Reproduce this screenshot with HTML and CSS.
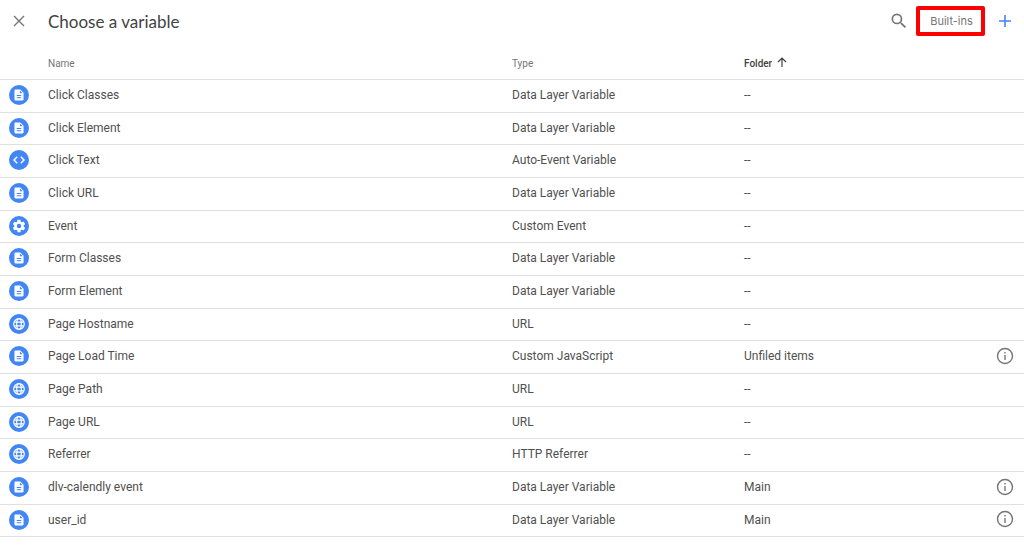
FILE: index.html
```html
<!DOCTYPE html>
<html lang="en">
<head>
    <meta charset="utf-8">
    <title>Choose a variable</title>
    <link rel="stylesheet" href="styles.css">
</head>
<body>
    <header class="toolbar">
        <button class="icon-button close" id="close" aria-label="Close">
            <svg width="12" height="12" viewBox="0 0 12 12"><path d="M1 1l10 10M11 1L1 11"/></svg>
        </button>
        <h1 class="title">Choose a variable</h1>
        <button class="icon-button search" aria-label="Search">
            <svg width="20" height="20" viewBox="0 0 24 24"><path d="M15.5 14h-.79l-.28-.27A6.47 6.47 0 0 0 16 9.5 6.5 6.5 0 1 0 9.5 16c1.61 0 3.09-.59 4.23-1.57l.27.28v.79l5 4.99L20.49 19l-4.99-5zm-6 0a4.5 4.5 0 1 1 0-9 4.5 4.5 0 0 1 0 9z"/></svg>
        </button>
        <button class="built-ins">Built-ins</button>
        <button class="icon-button add" aria-label="New variable">
            <svg width="12" height="12" viewBox="0 0 12 12"><path d="M6 0v12M0 6h12"/></svg>
        </button>
    </header>

    <table class="variables">
        <thead>
            <tr>
                <th class="col-icon"></th>
                <th class="col-name">Name</th>
                <th class="col-type">Type</th>
                <th class="col-folder sorted">Folder
                    <svg class="arrow" width="10" height="10" viewBox="0 0 10 10"><path d="M5 10V1M1 5l4-4 4 4"/></svg>
                </th>
                <th class="col-info"></th>
            </tr>
        </thead>
        <tbody id="rows"></tbody>
    </table>

    <svg class="symbols" width="0" height="0">
        <symbol id="doc" viewBox="-1 -1 22 22">
            <path fill="#fff" fill-rule="evenodd" d="M6.2 4h5.3L15 7.5v7.3c0 .7-.5 1.2-1.2 1.2H6.2c-.7 0-1.2-.5-1.2-1.2V5.2c0-.7.5-1.2 1.2-1.2zM11 5v3h3zM7.5 10v1h5v-1zM7.5 12.5v1h5v-1z"/>
        </symbol>
        <symbol id="code" viewBox="0 0 20 20">
            <path fill="none" stroke="#fff" stroke-width="1.5" d="M8.2 6.8L5 10l3.2 3.2M11.8 6.8L15 10l-3.2 3.2"/>
        </symbol>
        <symbol id="gear" viewBox="-4 -4 32 32">
            <path fill="#fff" d="M19.43 12.98c.04-.32.07-.64.07-.98s-.03-.66-.07-.98l2.11-1.65c.19-.15.24-.42.12-.64l-2-3.46c-.12-.22-.39-.3-.61-.22l-2.49 1c-.52-.4-1.08-.73-1.69-.98l-.38-2.65A.488.488 0 0 0 14 2h-4c-.25 0-.46.18-.49.42l-.38 2.65c-.61.25-1.17.59-1.69.98l-2.49-1c-.23-.09-.49 0-.61.22l-2 3.46c-.13.22-.07.49.12.64l2.11 1.65c-.04.32-.07.65-.07.98s.03.66.07.98l-2.11 1.65c-.19.15-.24.42-.12.64l2 3.46c.12.22.39.3.61.22l2.49-1c.52.4 1.08.73 1.69.98l.38 2.65c.03.24.24.42.49.42h4c.25 0 .46-.18.49-.42l.38-2.65c.61-.25 1.17-.59 1.69-.98l2.49 1c.23.09.49 0 .61-.22l2-3.46c.12-.22.07-.49-.12-.64l-2.11-1.65zM12 15.5a3.5 3.5 0 1 1 0-7 3.5 3.5 0 0 1 0 7z"/>
        </symbol>
        <symbol id="globe" viewBox="0 0 20 20">
            <g fill="none" stroke="#fff" stroke-width="1.2">
                <circle cx="10" cy="10" r="5.3"/>
                <ellipse cx="10" cy="10" rx="2.3" ry="5.3"/>
                <path d="M5.2 8.2h9.6M5.2 11.8h9.6"/>
            </g>
        </symbol>
        <symbol id="info" viewBox="0 0 18 18">
            <circle cx="9" cy="9" r="7.5" fill="none" stroke="#757575" stroke-width="1.4"/>
            <path fill="#757575" d="M8.3 8h1.4v5H8.3zM8.3 5h1.4v1.4H8.3z"/>
        </symbol>
    </svg>

    <script src="script.js"></script>
</body>
</html>
```

FILE: styles.css
```css
* {
    box-sizing: border-box;
}

body {
    margin: 0;
    background: #fff;
    color: #505050;
    font-family: Roboto, "Liberation Sans", sans-serif;
    font-size: 12px;
}

button {
    border: none;
    background: none;
    font-family: inherit;
    cursor: pointer;
}

svg {
    display: block;
}

.toolbar {
    display: flex;
    align-items: center;
    height: 42px;
    padding-right: 7px;
}

.icon-button {
    display: flex;
    align-items: center;
    justify-content: center;
    padding: 0;
    height: 24px;
    fill: none;
}

.close {
    width: 38px;
    stroke: #757575;
    stroke-width: 1.4;
}

.title {
    flex: 1;
    margin: 0;
    padding-left: 10px;
    color: #424242;
    font-family: Lato, Roboto, sans-serif;
    font-size: 17px;
    font-weight: 400;
}

.search {
    width: 20px;
    margin-right: 7px;
    fill: #757575;
}

.built-ins {
    width: 69px;
    height: 30px;
    padding: 0 0 0 2px;
    border: 4px solid #f00;
    border-radius: 2px;
    color: #757575;
    font-family: Inter, Roboto, sans-serif;
    font-size: 11px;
}

.add {
    width: 24px;
    margin-left: 8px;
    stroke: #4285f4;
    stroke-width: 1.6;
}

.variables {
    width: 100%;
    table-layout: fixed;
    border-spacing: 0;
}

.variables th,
.variables td {
    padding: 0;
    border-bottom: 1px solid #e0e0e0;
    text-align: left;
    vertical-align: middle;
}

.variables th {
    height: 38px;
    padding-top: 5px;
    color: #757575;
    font-size: 10px;
    font-weight: 400;
}

.variables .sorted {
    color: #424242;
    font-weight: 500;
}

.arrow {
    display: inline-block;
    margin-left: 2px;
    fill: none;
    stroke: #424242;
    stroke-width: 1.2;
}

.variables td {
    height: 33px;
    padding-bottom: 2px;
}

.variables tr:nth-child(3n + 2) td {
    height: 32px;
}

.variables .cell-info {
    padding-bottom: 0;
}

.col-icon {
    width: 48px;
}

.col-type {
    width: 232px;
}

.col-folder {
    width: 232px;
}

.col-info {
    width: 48px;
}

.badge {
    width: 20px;
    height: 20px;
    margin-left: 9px;
    border-radius: 50%;
    background: #4285f4;
}

.info {
    width: 18px;
    height: 18px;
    margin-left: 20px;
    padding: 0;
}

.symbols {
    position: absolute;
}
```

FILE: script.js
```javascript
const variables = [
    ['doc', 'Click Classes', 'Data Layer Variable', '--'],
    ['doc', 'Click Element', 'Data Layer Variable', '--'],
    ['code', 'Click Text', 'Auto-Event Variable', '--'],
    ['doc', 'Click URL', 'Data Layer Variable', '--'],
    ['gear', 'Event', 'Custom Event', '--'],
    ['doc', 'Form Classes', 'Data Layer Variable', '--'],
    ['doc', 'Form Element', 'Data Layer Variable', '--'],
    ['globe', 'Page Hostname', 'URL', '--'],
    ['doc', 'Page Load Time', 'Custom JavaScript', 'Unfiled items'],
    ['globe', 'Page Path', 'URL', '--'],
    ['globe', 'Page URL', 'URL', '--'],
    ['globe', 'Referrer', 'HTTP Referrer', '--'],
    ['doc', 'dlv-calendly event', 'Data Layer Variable', 'Main'],
    ['doc', 'user_id', 'Data Layer Variable', 'Main']
];

document.getElementById('rows').innerHTML = variables.map(([icon, name, type, folder]) => {
    // only variables that live in a folder have details
    const info = folder === '--' ? '' :
        `<button class="info" aria-label="About ${name}"><svg width="18" height="18"><use href="#info"/></svg></button>`;
    return `<tr>
        <td class="cell-icon"><svg class="badge"><use href="#${icon}"/></svg></td>
        <td>${name}</td>
        <td>${type}</td>
        <td>${folder}</td>
        <td class="cell-info">${info}</td>
    </tr>`;
}).join('');
```
